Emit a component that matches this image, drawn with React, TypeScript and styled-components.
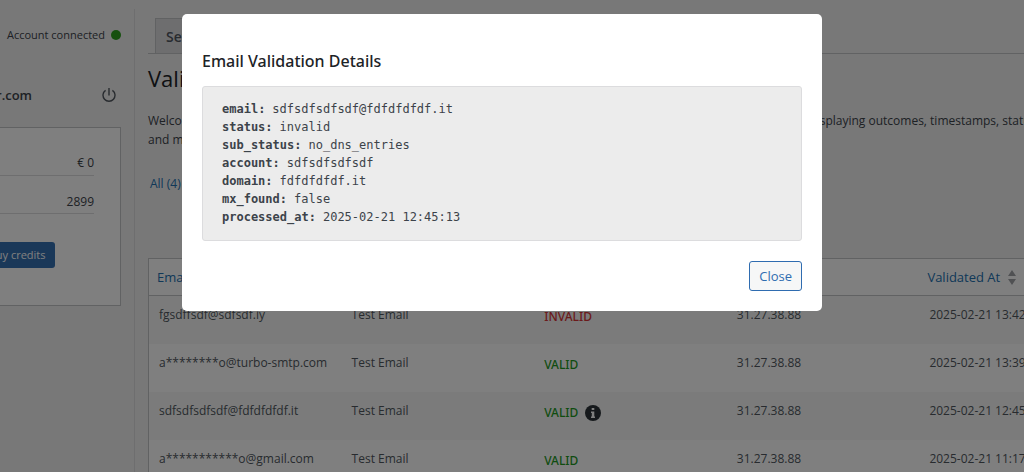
import React from "react";
import styled, { createGlobalStyle } from "styled-components";

const Global = createGlobalStyle`
  * { box-sizing: border-box; }
  body {
    margin: 0;
    background: #f0f0f1;
    color: #3c434a;
    font: 12px/18px "Open Sans", "Noto Sans", sans-serif;
    overflow: hidden;
  }
  h1, h2, p, dl, dd { margin: 0; }
  button { font: inherit; cursor: pointer; }
  a { color: #2271b1; text-decoration: none; }
`;

const Page = styled.div`
  display: flex;
  min-height: 100vh;
  overflow: hidden;
`;

const Sidebar = styled.aside`
  display: flex;
  flex: none;
  justify-content: flex-end;
  width: 135px;
  margin-top: 9px;
  border-right: 1px solid #dcdcde;
  overflow: hidden;
`;

const SidebarContent = styled.div`
  flex: none;
  width: 262px;
  padding: 16px 13px 0 0;
`;

const AccountStatus = styled.div`
  display: flex;
  align-items: center;
  justify-content: flex-end;
  gap: 6px;
  height: 20px;
  font-size: 11px;
`;

const Dot = styled.span`
  width: 10px;
  height: 10px;
  border-radius: 50%;
  background: #2ca01c;
`;

const AccountRow = styled.div`
  display: flex;
  align-items: center;
  justify-content: flex-end;
  gap: 70px;
  height: 20px;
  margin: 40px 5px 22px 0;
  font-size: 13px;
  font-weight: 600;
`;

const IconButton = styled.button`
  display: flex;
  padding: 0;
  border: 0;
  background: none;
  color: #50575e;
`;

const Card = styled.section`
  height: 179px;
  padding: 20px 26px;
  border: 1px solid #c3c4c7;
  background: #fff;
`;

const Balance = styled.div<{ $last?: boolean }>`
  display: flex;
  align-items: flex-end;
  justify-content: space-between;
  height: ${(p) => (p.$last ? 38 : 28)}px;
  padding-bottom: ${(p) => (p.$last ? 2 : 3)}px;
  border-bottom: 1px solid #dcdcde;
`;

const BuyButton = styled.button`
  display: block;
  width: 116px;
  height: 26px;
  margin: 28px auto 0;
  padding: 0 9px;
  border: 0;
  border-radius: 3px;
  background: #3470b2;
  color: #fff;
  font-size: 11px;
  text-align: right;
`;

const Main = styled.main`
  flex: 1 0 auto;
  min-width: 980px;
  padding: 18px 0 0 13px;
`;

const Tabs = styled.nav`
  display: flex;
  height: 36px;
  padding-left: 7px;
  border-bottom: 1px solid #c3c4c7;
`;

const Tab = styled.a`
  padding: 8px 10px;
  border: 1px solid #c3c4c7;
  border-bottom: 0;
  background: #dcdcde;
  color: #50575e;
  font-size: 14px;
  font-weight: 600;
  line-height: 20px;
`;

const Title = styled.h1`
  padding-top: 9px;
  color: #1d2327;
  font-size: 22px;
  font-weight: 400;
  line-height: 30px;
`;

const Intro = styled.p`
  margin-top: 18px;
  line-height: 19px;
  white-space: nowrap;
`;

const Filters = styled.div`
  height: 109px;
  padding: 25px 2px 0;
  line-height: 20px;
`;

const Table = styled.table`
  width: 965px;
  table-layout: fixed;
  border-spacing: 0;
  border: 1px solid #c3c4c7;
  background: #fff;
`;

const HeadCell = styled.th`
  height: 37px;
  padding: 0 8px;
  border-bottom: 1px solid #c3c4c7;
  font-size: 13px;
  font-weight: 400;
  text-align: left;
`;

const SortLink = styled.a`
  display: flex;
  align-items: center;
  gap: 8px;
`;

const Row = styled.tr`
  height: 48px;
  &:nth-child(odd) { background: #f6f7f7; }
`;

const Cell = styled.td`
  padding: 10px 10px 0;
  color: #50575e;
  vertical-align: top;
  white-space: nowrap;
`;

const Status = styled.span<{ $invalid?: boolean }>`
  display: flex;
  align-items: center;
  gap: 7px;
  height: 22px;
  color: ${(p) => (p.$invalid ? "#d63638" : "#1f9a1f")};
  font-family: "Noto Sans", sans-serif;
  font-weight: 500;
`;

const Overlay = styled.div`
  position: fixed;
  inset: 0;
  display: flex;
  align-items: flex-start;
  justify-content: center;
  padding: 14px 20px 0 0;
  background: rgba(0, 0, 0, 0.5);
`;

const Dialog = styled.div`
  width: 640px;
  padding: 36px 20px 20px;
  border-radius: 5px;
  background: #fff;
`;

const DialogTitle = styled.h2`
  margin-bottom: 14px;
  color: #1d2327;
  font-family: "Noto Sans", sans-serif;
  font-size: 16px;
  font-weight: 500;
  line-height: 22px;
`;

const Details = styled.dl`
  padding: 13px 19px 14px;
  border: 1px solid #dcdcde;
  border-radius: 3px;
  background: #ececec;
  font: 12px/18px "DejaVu Sans Mono", monospace;
`;

const Detail = styled.div`
  display: flex;
  gap: 7px;
  dt { font-weight: 700; }
`;

const Actions = styled.div`
  display: flex;
  justify-content: flex-end;
  margin-top: 20px;
`;

const CloseButton = styled.button`
  height: 30px;
  padding: 0 9px;
  border: 1px solid #2f6cb0;
  border-radius: 3px;
  background: #f6f7f7;
  color: #2f6cb0;
  font-size: 13px;
`;

const PowerIcon = () => (
  <svg width="14" height="14" viewBox="0 0 14 14" fill="none" stroke="currentColor" strokeWidth="1.4">
    <path d="M7 0v7.5M3.6 2.3a6 6 0 1 0 6.8 0" />
  </svg>
);

const SortIcon = () => (
  <svg width="8" height="15" viewBox="0 0 8 15" fill="#a0a3a7">
    <path d="M4 0l4 6H0zM4 15l4-6H0z" />
  </svg>
);

const InfoIcon = () => (
  <svg width="16" height="16" viewBox="0 0 16 16">
    <circle cx="8" cy="8" r="8" fill="#2c3338" />
    <path d="M6.7 3h2.6v2H6.7zM6 6.4h3.3v5H10V13H6v-1.6h.8V8H6z" fill="#fff" />
  </svg>
);

const columns = ["Email", "Source", "Status", "IP Address"];

const rows = [
  { email: "fgsdffsdf@sdfsdf.iy", status: "INVALID", at: "2025-02-21 13:42:10" },
  { email: "a********o@turbo-smtp.com", status: "VALID", at: "2025-02-21 13:39:24" },
  { email: "sdfsdfsdfsdf@fdfdfdfdf.it", status: "VALID", at: "2025-02-21 12:45:13", info: true },
  { email: "a***********o@gmail.com", status: "VALID", at: "2025-02-21 11:17:05" },
];

const details = [
  ["email", "sdfsdfsdfsdf@fdfdfdfdf.it"],
  ["status", "invalid"],
  ["sub_status", "no_dns_entries"],
  ["account", "sdfsdfsdfsdf"],
  ["domain", "fdfdfdfdf.it"],
  ["mx_found", "false"],
  ["processed_at", "2025-02-21 12:45:13"],
];

export default function App() {
  return (
    <>
      <Global />
      <Page>
        <Sidebar>
          <SidebarContent>
            <AccountStatus>
              Account connected <Dot />
            </AccountStatus>
            <AccountRow>
              <span>user.com</span>
              <IconButton aria-label="Disconnect">
                <PowerIcon />
              </IconButton>
            </AccountRow>
            <Card>
              <Balance>
                <span>Balance</span>
                <span>€ 0</span>
              </Balance>
              <Balance $last>
                <span>Credits</span>
                <span>2899</span>
              </Balance>
              <BuyButton>Buy credits</BuyButton>
            </Card>
          </SidebarContent>
        </Sidebar>
        <Main>
          <Tabs>
            <Tab href="#settings">Settings</Tab>
          </Tabs>
          <Title>Validation history</Title>
          <Intro>
            Welcome to the validation history. This page lists every email address checked on your WordPress site in one full view, displaying outcomes, timestamps, status
            <br />
            and more details.
          </Intro>
          <Filters>
            <a href="#all">All (4)</a>
          </Filters>
          <Table>
            <thead>
              <tr>
                {columns.map((c) => (
                  <HeadCell key={c}>
                    <SortLink href="#sort">{c}</SortLink>
                  </HeadCell>
                ))}
                <HeadCell>
                  <SortLink href="#sort">
                    Validated At <SortIcon />
                  </SortLink>
                </HeadCell>
              </tr>
            </thead>
            <tbody>
              {rows.map((r) => (
                <Row key={r.email}>
                  <Cell>{r.email}</Cell>
                  <Cell>Test Email</Cell>
                  <Cell>
                    <Status $invalid={r.status === "INVALID"}>
                      {r.status}
                      {r.info && <InfoIcon />}
                    </Status>
                  </Cell>
                  <Cell>31.27.38.88</Cell>
                  <Cell>{r.at}</Cell>
                </Row>
              ))}
            </tbody>
          </Table>
        </Main>
      </Page>
      <Overlay>
        <Dialog role="dialog" aria-modal="true" aria-labelledby="details-title">
          <DialogTitle id="details-title">Email Validation Details</DialogTitle>
          <Details>
            {details.map(([k, v]) => (
              <Detail key={k}>
                <dt>{k}:</dt>
                <dd>{v}</dd>
              </Detail>
            ))}
          </Details>
          <Actions>
            <CloseButton>Close</CloseButton>
          </Actions>
        </Dialog>
      </Overlay>
    </>
  );
}
